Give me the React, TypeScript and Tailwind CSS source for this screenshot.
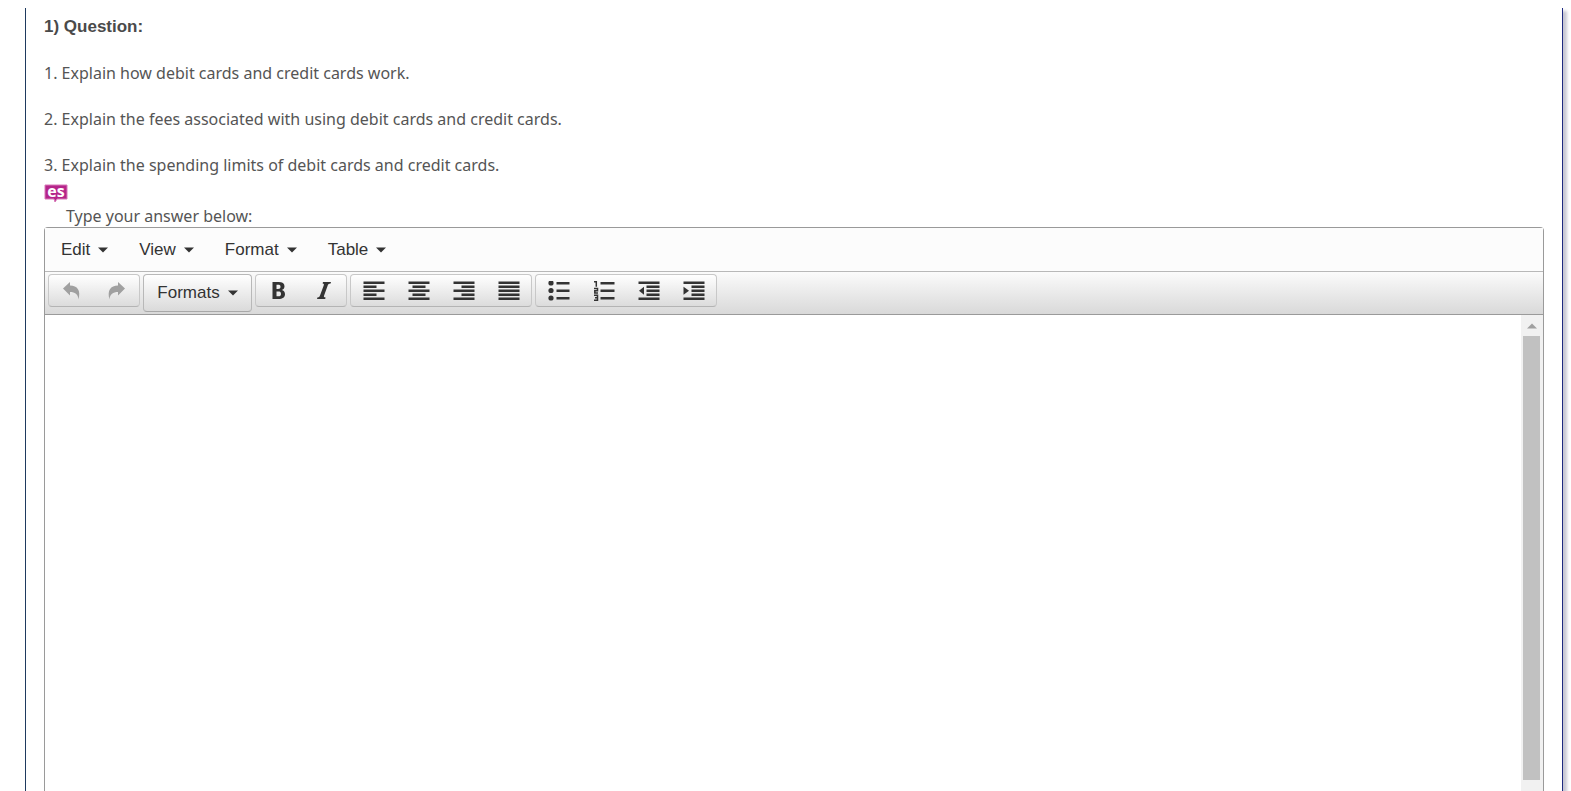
import type { ReactNode } from "react";

function Caret() {
  return (
    <svg width="10" height="6" viewBox="0 0 10 6" aria-hidden="true" className="fill-[#333]">
      <path d="M0 0.5h10L5 5.5z" />
    </svg>
  );
}

function Icon({ children }: { children: ReactNode }) {
  return (
    <svg width="22" height="20" viewBox="0.5 0.5 22 20" aria-hidden="true" className="fill-[#333]">
      {children}
    </svg>
  );
}

/* Horizontal bars given as [x, y, width] */
function Bars({ rows }: { rows: number[][] }) {
  return (
    <>
      {rows.map(([x, y, w]) => (
        <rect key={`${x}-${y}`} x={x} y={y} width={w} height="2.5" />
      ))}
    </>
  );
}

const bubble = "M1 1h22v14H13l-2 3-1-3H1z";

const groups: { label: string; icon: ReactNode }[][] = [
  [
    {
      label: "Bold",
      icon: <Icon><path fillRule="evenodd" d="M5 1.500h6c4 0 6 1.500 6 4.300 0 2-1 3.200-2.800 3.800 2.200.500 3.300 1.900 3.300 4.200 0 3.200-2.500 4.700-6.500 4.700H5zm4 2.700v4.300h1.500c1.800 0 2.500-.600 2.500-2.200s-.700-2.100-2.500-2.100zm0 6.900v4.700h1.800c1.900 0 2.700-.700 2.700-2.400s-.900-2.300-2.700-2.300z" /></Icon>,
    },
    {
      label: "Italic",
      icon: <Icon><path d="M10.500 1.500h8l-.400 1.500c-1.800.100-2.300.400-2.800 1.800l-3.700 10.200c-.500 1.400-.200 1.800 1.500 2l-.400 1.500H4.500l.400-1.500c1.700-.200 2.100-.500 2.600-1.900l3.700-10.200c.500-1.400.200-1.800-1.100-1.900z" /></Icon>,
    },
  ],
  [
    { label: "Align left", icon: <Icon><Bars rows={[[1, 1, 21], [1, 5, 13], [1, 9, 21], [1, 13, 13], [1, 17, 21]]} /></Icon> },
    { label: "Align center", icon: <Icon><Bars rows={[[1, 1, 21], [5, 5, 13], [1, 9, 21], [5, 13, 13], [1, 17, 21]]} /></Icon> },
    { label: "Align right", icon: <Icon><Bars rows={[[1, 1, 21], [9, 5, 13], [1, 9, 21], [9, 13, 13], [1, 17, 21]]} /></Icon> },
    { label: "Justify", icon: <Icon><Bars rows={[[1, 1, 21], [1, 5, 21], [1, 9, 21], [1, 13, 21], [1, 17, 21]]} /></Icon> },
  ],
  [
    {
      label: "Bullet list",
      icon: (
        <Icon>
          <circle cx="3.500" cy="2.500" r="2.600" />
          <circle cx="3.500" cy="10" r="2.600" />
          <circle cx="3.500" cy="17.500" r="2.600" />
          <Bars rows={[[9, 1.5, 13], [9, 9, 13], [9, 16.5, 13]]} />
        </Icon>
      ),
    },
    {
      label: "Numbered list",
      icon: (
        <Icon>
          <g fill="none" stroke="#333" strokeWidth="1.500">
            <path d="M1.500 1.200h2.300v5" />
            <path d="M1.500 8h3.500v2.200H2.300v2.300H5.500" />
            <path d="M1.500 14.700h3.500v5H1.500M2.500 17.200h2.500" />
          </g>
          <Bars rows={[[8, 1.5, 14], [8, 9, 14], [8, 16.5, 14]]} />
        </Icon>
      ),
    },
    {
      label: "Decrease indent",
      icon: (
        <Icon>
          <path d="M1.500 10.200l5-4v8z" />
          <Bars rows={[[1, 1, 21], [9, 5, 13], [9, 9, 13], [9, 13, 13], [1, 17, 21]]} />
        </Icon>
      ),
    },
    {
      label: "Increase indent",
      icon: (
        <Icon>
          <path d="M6.500 10.200l-5.500-4v8z" />
          <Bars rows={[[1, 1, 21], [9, 5, 13], [9, 9, 13], [9, 13, 13], [1, 17, 21]]} />
        </Icon>
      ),
    },
  ],
];

const undoPath = "M2 7.500L9 1v3.500c7.500 0 11 5 8.500 14-.5-5.500-3.500-7.500-8.500-7.500v3.500z";

const groupStyle =
  "flex h-[33px] rounded-sm border border-[#c8c8c8] border-b-[#b4b4b4] bg-linear-to-b from-white to-[#dcdcdc]";

export default function App() {
  return (
    <div className="h-screen overflow-hidden bg-white pt-2 pr-2 pl-[25px] text-[#555]">
      <main className="flex h-full flex-col border-x border-l-[#1f3a5f] border-r-[#1e2a80] px-[18px] font-['Noto_Sans',sans-serif] text-base leading-[22px] shadow-[4px_3px_3px_#c8c8d4]">
        <h1 className="mt-2 mb-6 font-['Liberation_Sans',sans-serif] text-[17px] font-bold text-[#4a4a4a]">1) Question:</h1>
        <p className="mb-6">1. Explain how debit cards and credit cards work.</p>
        <p className="mb-6">2. Explain the fees associated with using debit cards and credit cards.</p>
        <p className="mb-2">3. Explain the spending limits of debit cards and credit cards.</p>
        <a href="#es" aria-label="Español" className="relative block h-[21px] w-6">
          <svg width="24" height="19" viewBox="0 0 24 19" aria-hidden="true">
            <path d={bubble} fill="#b5258a" stroke="#d878b8" />
          </svg>
          <span className="absolute inset-x-0 top-0 text-center font-['Open_Sans',sans-serif] text-base leading-[14px] font-bold text-white">es</span>
        </a>
        <label htmlFor="answer" className="ml-[22px]">Type your answer below:</label>

        <section className="flex min-h-0 flex-1 flex-col rounded-t-sm border border-b-0 border-[#9a9a9a] font-['Liberation_Sans',sans-serif] text-[17px] text-[#333]">
          <nav className="flex h-[43px] items-center gap-[31px] bg-[#fcfcfc] pl-4">
            {["Edit", "View", "Format", "Table"].map((name) => (
              <button key={name} type="button" className="flex items-center gap-2">
                {name}
                <Caret />
              </button>
            ))}
          </nav>
          <div className="flex h-11 items-start gap-[3px] border-y border-t-[#b8b8b8] border-b-[#9a9a9a] bg-linear-to-b from-[#fbfbfb] to-[#d9d9d9] pt-[2px] pl-[3px]">
            <div className={groupStyle}>
              <button type="button" disabled aria-label="Undo" className="flex w-[45px] items-center justify-center">
                <svg width="22" height="20" viewBox="0 0 22 20" aria-hidden="true" className="fill-[#a0a0a0]">
                  <path d={undoPath} />
                </svg>
              </button>
              <button type="button" disabled aria-label="Redo" className="flex w-[45px] items-center justify-center">
                <svg width="22" height="20" viewBox="0 0 22 20" aria-hidden="true" className="fill-[#a0a0a0]">
                  <path d={undoPath} transform="matrix(-1 0 0 1 21 0)" />
                </svg>
              </button>
            </div>
            <button
              type="button"
              className="flex h-[38px] w-[109px] items-center justify-center gap-2 rounded-sm border border-[#b8b8b8] border-b-[#a8a8a8] bg-linear-to-b from-white to-[#dadada]"
            >
              Formats
              <Caret />
            </button>
            {groups.map((group, index) => (
              <div key={index} className={groupStyle}>
                {group.map((item) => (
                  <button key={item.label} type="button" aria-label={item.label} className="flex w-[45px] items-center justify-center">
                    {item.icon}
                  </button>
                ))}
              </div>
            ))}
          </div>
          <div className="flex min-h-0 flex-1">
            <textarea id="answer" className="min-w-0 flex-1 resize-none bg-white p-2 outline-none" />
            <div className="flex w-[22px] flex-col bg-[#f1f1f1] pr-[3px] pl-[2px]">
              <button type="button" aria-label="Scroll up" className="flex h-[21px] items-center justify-center">
                <svg width="10" height="6" viewBox="0 0 10 6" aria-hidden="true" className="fill-[#a0a0a0]">
                  <path d="M0 5.500h10L5 0.500z" />
                </svg>
              </button>
              <div className="mb-[11px] flex-1 bg-[#c1c1c1]" />
            </div>
          </div>
        </section>
      </main>
    </div>
  );
}
